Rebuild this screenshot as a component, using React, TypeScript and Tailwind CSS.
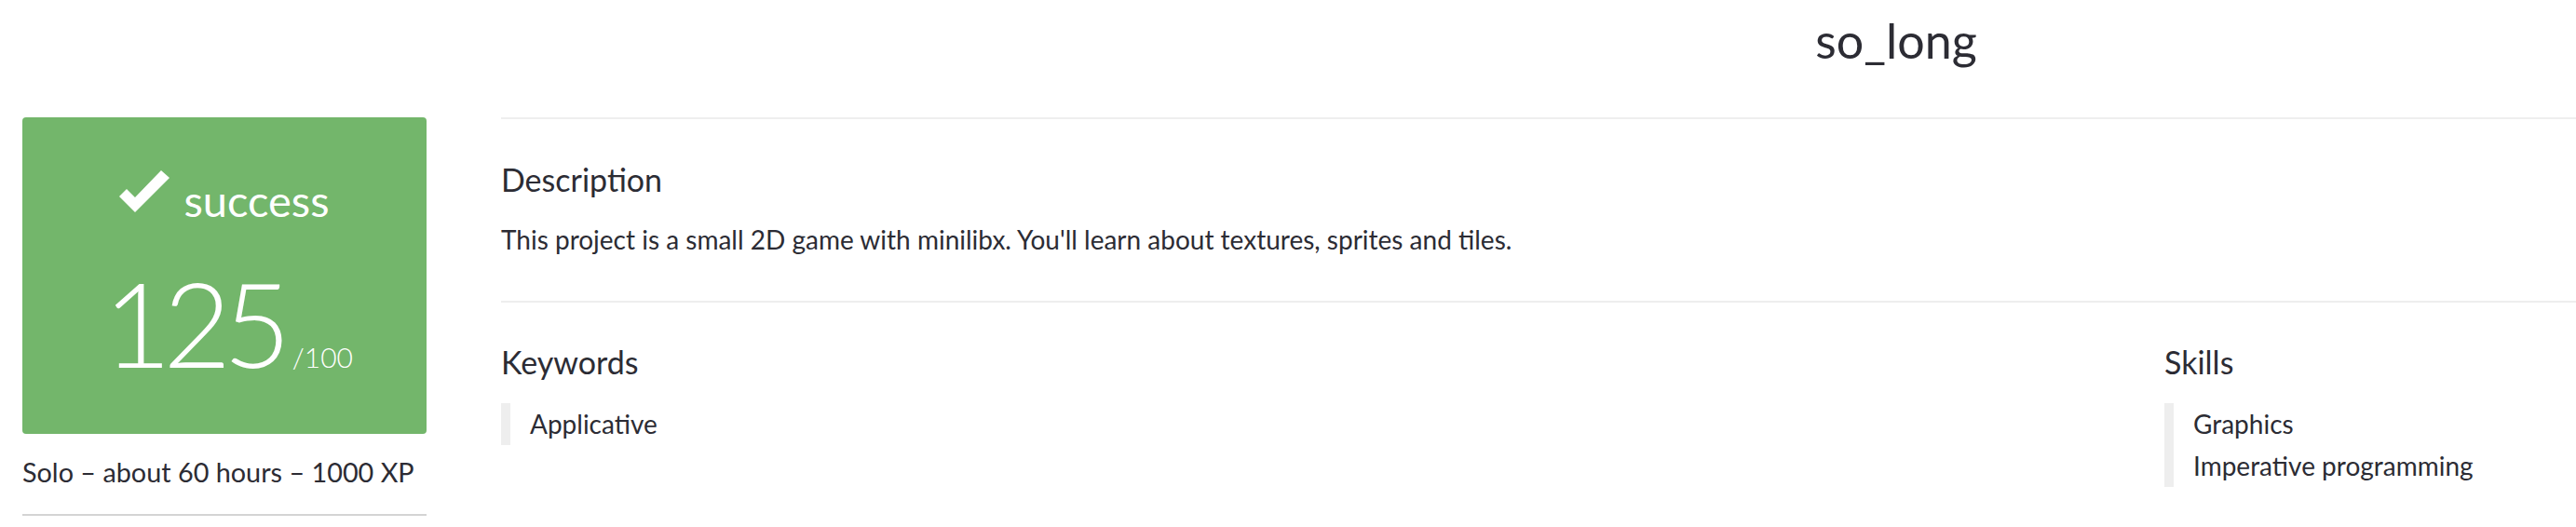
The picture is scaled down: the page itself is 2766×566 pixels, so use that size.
import React from "react";

function CheckIcon() {
  return (
    <svg viewBox="0 0 54 47" className="w-[54px] h-[47px] mb-[9px]" fill="white">
      <polygon points="0,29 8,21 17,30 45,1 54,9 17,46" />
    </svg>
  );
}

export default function App() {
  return (
    <div className="w-full h-[566px] overflow-hidden bg-white text-[#2c2c34] font-['Lato',sans-serif]">
      <div className="flex pl-6 w-[3600px]">
        {/* left column: mark + project info */}
        <div className="w-[434px] shrink-0 pt-[126px]">
          <div className="h-[340px] rounded-[4px] bg-[#73b66b] text-white flex flex-col items-center pt-[56px]">
            <div className="flex items-end gap-[15px]">
              <CheckIcon />
              <span className="text-[47px] leading-[46px]">success</span>
            </div>
            <div className="flex items-baseline mt-[46px] ml-[8px]">
              <span className="text-[126px] leading-[126px] font-light tracking-[-0.07em]">125</span>
              <span className="text-[30px] font-light pl-[10px]">/100</span>
            </div>
          </div>
          <p className="mt-[21px] text-[28.8px] leading-[40px]">Solo – about 60 hours – 1000 XP</p>
          <div className="mt-[25px] h-[2px] bg-[#d4d4d4]" />
        </div>

        {/* right column */}
        <div className="ml-[80px] w-[2996px] shrink-0">
          <h1 className="h-[126px] pt-[17px] text-center text-[52px] leading-[52px]">so_long</h1>

          <section className="border-t-2 border-[#eeeeee] pt-[45px] pb-[46px]">
            <h2 className="text-[34px] leading-[40px]">Description</h2>
            <p className="mt-[24px] text-[28px] leading-[40px]">
              This project is a small 2D game with minilibx. You'll learn about textures, sprites and tiles.
            </p>
          </section>

          <section className="border-t-2 border-[#eeeeee] pt-[44px] flex">
            <div className="w-[1786px] shrink-0">
              <h2 className="text-[34px] leading-[40px]">Keywords</h2>
              <ul className="mt-[24px] border-l-[10px] border-[#eeeeee] pl-[21px] text-[28px] leading-[45px]">
                <li>Applicative</li>
              </ul>
            </div>
            <div className="flex-1">
              <h2 className="text-[34px] leading-[40px]">Skills</h2>
              <ul className="mt-[24px] border-l-[10px] border-[#eeeeee] pl-[21px] text-[28px] leading-[45px]">
                <li>Graphics</li>
                <li>Imperative programming</li>
              </ul>
            </div>
          </section>
        </div>
      </div>
    </div>
  );
}
